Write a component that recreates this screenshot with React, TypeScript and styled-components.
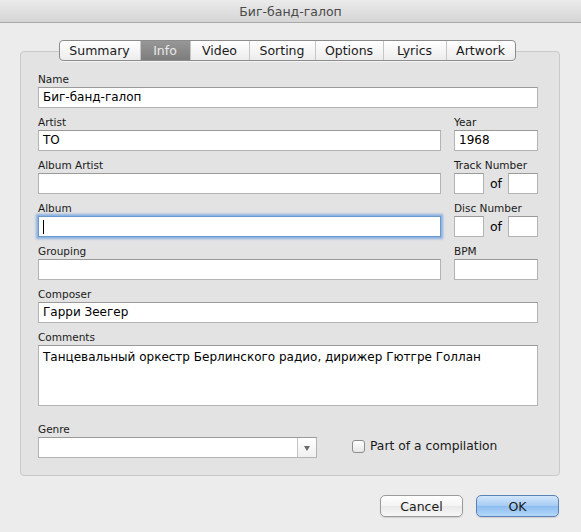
import styled, { createGlobalStyle } from "styled-components";

const GlobalStyle = createGlobalStyle`
  html, body {
    margin: 0;
    padding: 0;
    background: #ececec;
  }
  * {
    box-sizing: border-box;
  }
`;

const Window = styled.div`
  width: 581px;
  height: 532px;
  display: flex;
  flex-direction: column;
  background: #ececec;
  font-family: "DejaVu Sans", "Liberation Sans", sans-serif;
  color: #000;
  overflow: hidden;
`;

const TitleBar = styled.div`
  height: 23px;
  display: flex;
  align-items: center;
  justify-content: center;
  background: linear-gradient(#ebebeb, #d5d5d5);
  border-bottom: 1px solid #a8a8a8;
  color: #4a4a4a;
  font-size: 12.5px;
`;

const Body = styled.div`
  padding: 17px 21px 0 20px;
  display: flex;
  flex-direction: column;
`;

const TabRow = styled.div`
  display: flex;
  justify-content: center;
  margin-bottom: -10px;
  position: relative;
  z-index: 1;
  padding-right: 6px;
`;

const Tabs = styled.div`
  display: flex;
  height: 21px;
  border: 1px solid #8c8c8c;
  border-radius: 4px;
  overflow: hidden;
  background: linear-gradient(#ffffff, #ececec);
  box-shadow: 0 1px 0 rgba(255, 255, 255, 0.6);
`;

const Tab = styled.div<{ $active?: boolean; $w: number }>`
  width: ${(p) => p.$w}px;
  display: flex;
  align-items: center;
  justify-content: center;
  font-size: 12.5px;
  color: ${(p) => (p.$active ? "#e8e8e8" : "#1a1a1a")};
  background: ${(p) =>
    p.$active ? "linear-gradient(#979797, #7d7d7d)" : "transparent"};
  & + & {
    border-left: 1px solid #c6c6c6;
  }
`;

const Panel = styled.div`
  height: 425px;
  border: 1px solid #c9c9c9;
  border-radius: 4px;
  background: #e3e3e3;
  padding: 20px 20px 0 17px;
`;

const Grid = styled.div`
  display: grid;
  grid-template-columns: 403px 84px;
  column-gap: 13px;
  row-gap: 7px;
`;

const Field = styled.div<{ $span?: boolean }>`
  display: flex;
  flex-direction: column;
  grid-column: ${(p) => (p.$span ? "1 / 3" : "auto")};
`;

const Label = styled.div`
  height: 14px;
  margin-bottom: 1px;
  font-size: 10.5px;
  line-height: 14px;
  color: #1a1a1a;
`;

const Input = styled.div<{ $focus?: boolean; $h?: number }>`
  height: ${(p) => p.$h ?? 21}px;
  background: #fff;
  border: 1px solid ${(p) => (p.$focus ? "#6b98cf" : "#b4b4b4")};
  border-top-color: ${(p) => (p.$focus ? "#6b98cf" : "#9a9a9a")};
  box-shadow: ${(p) =>
    p.$focus ? "0 0 2px 2px rgba(110, 160, 225, 0.75)" : "none"};
  font-size: 12px;
  line-height: 19px;
  padding: 0 4px;
  display: flex;
  align-items: ${(p) => (p.$h ? "flex-start" : "center")};
  padding-top: ${(p) => (p.$h ? "2px" : "0")};
  white-space: nowrap;
  overflow: hidden;
`;

const Caret = styled.span`
  display: inline-block;
  width: 1px;
  height: 14px;
  background: #000;
`;

const NumberPair = styled.div`
  display: flex;
  align-items: center;
  gap: 4px;
`;

const SmallInput = styled(Input)`
  width: 31px;
`;

const Of = styled.span`
  font-size: 12.5px;
  width: 17px;
  text-align: center;
`;

const BottomRow = styled.div`
  display: flex;
  align-items: flex-end;
  margin-top: 16px;
`;

const GenreField = styled.div`
  width: 279px;
  display: flex;
  flex-direction: column;
`;

const Select = styled.div`
  height: 21px;
  display: flex;
  background: #fff;
  border: 1px solid #b4b4b4;
  border-top-color: #9a9a9a;
`;

const SelectValue = styled.div`
  flex: 1;
`;

const SelectArrow = styled.div`
  width: 19px;
  border-left: 1px solid #c4c4c4;
  background: linear-gradient(#ffffff, #f0f0f0);
  display: flex;
  align-items: center;
  justify-content: center;
  &::after {
    content: "";
    border-left: 3px solid transparent;
    border-right: 3px solid transparent;
    border-top: 5px solid #6a6a6a;
    margin-top: 2px;
  }
`;

const CheckLabel = styled.label`
  display: flex;
  align-items: center;
  gap: 5px;
  margin-left: 35px;
  margin-bottom: 5px;
  font-size: 12.3px;
  color: #1a1a1a;
`;

const CheckBox = styled.span`
  width: 13px;
  height: 13px;
  border: 1px solid #8d8d8d;
  border-radius: 3px;
  background: linear-gradient(#ffffff, #e6e6e6);
`;

const ButtonRow = styled.div`
  display: flex;
  justify-content: flex-end;
  gap: 13px;
  margin-top: 19px;
  padding-right: 1px;
`;

const Button = styled.div<{ $primary?: boolean }>`
  width: 83px;
  height: 22px;
  border-radius: 5px;
  display: flex;
  align-items: center;
  justify-content: center;
  font-size: 12.5px;
  color: #1a1a1a;
  border: 1px solid ${(p) => (p.$primary ? "#5d82b4" : "#9a9a9a")};
  background: ${(p) =>
    p.$primary
      ? "linear-gradient(#d3e6fb, #a5cbf4 50%, #8dbdf0 51%, #b3d8fb)"
      : "linear-gradient(#ffffff, #f3f3f3 50%, #e9e9e9 51%, #f7f7f7)"};
  box-shadow: 0 1px 1px rgba(0, 0, 0, 0.12);
`;

const tabs = [
  { name: "Summary", w: 80 },
  { name: "Info", w: 50 },
  { name: "Video", w: 59 },
  { name: "Sorting", w: 66 },
  { name: "Options", w: 68 },
  { name: "Lyrics", w: 63 },
  { name: "Artwork", w: 69 },
];

function NumberField({ label }: { label: string }) {
  return (
    <Field>
      <Label>{label}</Label>
      <NumberPair>
        <SmallInput />
        <Of>of</Of>
        <SmallInput />
      </NumberPair>
    </Field>
  );
}

export default function App() {
  return (
    <>
      <GlobalStyle />
      <Window>
        <TitleBar>Биг-банд-галоп</TitleBar>
        <Body>
          <TabRow>
            <Tabs>
              {tabs.map((t) => (
                <Tab key={t.name} $w={t.w} $active={t.name === "Info"}>
                  {t.name}
                </Tab>
              ))}
            </Tabs>
          </TabRow>
          <Panel>
            <Grid>
              <Field $span>
                <Label>Name</Label>
                <Input>Биг-банд-галоп</Input>
              </Field>
              <Field>
                <Label>Artist</Label>
                <Input>TO</Input>
              </Field>
              <Field>
                <Label>Year</Label>
                <Input>1968</Input>
              </Field>
              <Field>
                <Label>Album Artist</Label>
                <Input />
              </Field>
              <NumberField label="Track Number" />
              <Field>
                <Label>Album</Label>
                <Input $focus>
                  <Caret />
                </Input>
              </Field>
              <NumberField label="Disc Number" />
              <Field>
                <Label>Grouping</Label>
                <Input />
              </Field>
              <Field>
                <Label>BPM</Label>
                <Input />
              </Field>
              <Field $span>
                <Label>Composer</Label>
                <Input>Гарри Зеегер</Input>
              </Field>
              <Field $span>
                <Label>Comments</Label>
                <Input $h={61}>
                  Танцевальный оркестр Берлинского радио, дирижер Гютгре Голлан
                </Input>
              </Field>
            </Grid>
            <BottomRow>
              <GenreField>
                <Label>Genre</Label>
                <Select>
                  <SelectValue />
                  <SelectArrow />
                </Select>
              </GenreField>
              <CheckLabel>
                <CheckBox />
                Part of a compilation
              </CheckLabel>
            </BottomRow>
          </Panel>
          <ButtonRow>
            <Button>Cancel</Button>
            <Button $primary>OK</Button>
          </ButtonRow>
        </Body>
      </Window>
    </>
  );
}
